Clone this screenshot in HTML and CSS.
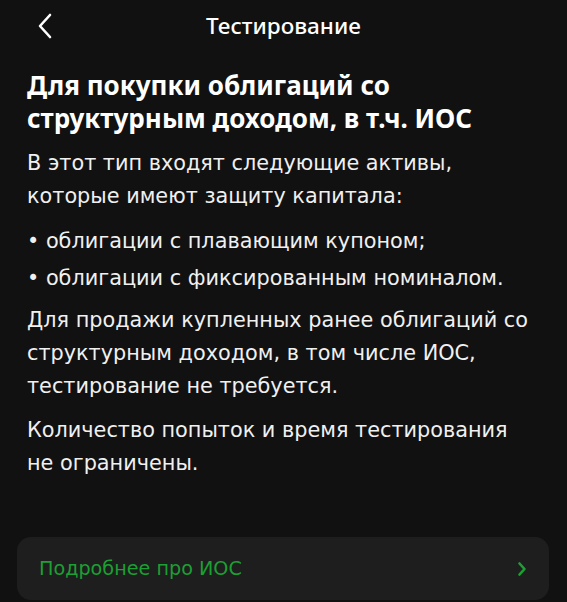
FILE: index.html
```html
<!DOCTYPE html>
<html lang="ru">

<head>
    <meta charset="UTF-8">
    <meta name="viewport" content="width=device-width, initial-scale=1.0">
    <title>Тестирование</title>
    <link rel="stylesheet" href="styles.css">
</head>

<body>
    <div class="header">
        <span class="back">
            <svg width="16" height="26" viewBox="0 0 16 26">
                <path d="M13 2 L3 13 L13 24" fill="none" stroke="#fff" stroke-width="2.6" stroke-linecap="round" stroke-linejoin="round" />
            </svg>
        </span>
        <div class="title">Тестирование</div>
    </div>
    <div class="content">
        <h1>Для покупки облигаций со структурным доходом, в т.ч. ИОС</h1>
        <p>В этот тип входят следующие активы,<br>которые имеют защиту капитала:</p>
        <ul class="list">
            <li>• облигации с плавающим купоном;</li>
            <li>• облигации с фиксированным номиналом.</li>
        </ul>
        <p>Для продажи купленных ранее облигаций со<br>структурным доходом, в том числе ИОС,<br>тестирование не требуется.</p>
        <p>Количество попыток и время тестирования<br>не ограничены.</p>
    </div>
    <div class="more">
        <span>Подробнее про ИОС</span>
        <svg width="10" height="16" viewBox="0 0 10 16">
            <path d="M2.5 2.5 L7.5 8 L2.5 13.5" fill="none" stroke="#1c9f33" stroke-width="2.6" stroke-linecap="round" stroke-linejoin="round" />
        </svg>
    </div>
</body>

</html>
```

FILE: styles.css
```css
html,
body {
    margin: 0;
    padding: 0;
    background: #111111;
}

body {
    width: 567px;
    height: 602px;
    overflow: hidden;
    color: #f0f0f0;
    font-family: "DejaVu Sans", "Noto Sans", sans-serif;
}

.header {
    position: relative;
    height: 52px;
    display: flex;
    align-items: center;
    justify-content: center;
}

.back {
    position: absolute;
    left: 37px;
    top: 13px;
    display: flex;
}

.title {
    font-family: "Noto Sans", sans-serif;
    font-size: 22.5px;
    font-weight: 500;
    color: #ffffff;
    margin-top: -1px;
}

.content {
    padding: 17px 27px 0;
}

.content h1 {
    margin: 0;
    font-family: "Noto Sans", sans-serif;
    font-size: 26px;
    line-height: 33px;
    font-weight: 700;
    color: #ffffff;
}

.content p {
    margin: 12px 0 0;
    font-size: 20.8px;
    line-height: 33px;
}

.content .list+p {
    margin-top: 9px;
}

.content p+p {
    margin-top: 11px;
}

.list {
    list-style: none;
    margin: 12px 0 0;
    padding: 0;
}

.list li {
    font-size: 20.8px;
    line-height: 33px;
}

.list li+li {
    margin-top: 4px;
}

.more {
    position: absolute;
    left: 17px;
    top: 537px;
    width: 532px;
    height: 63px;
    box-sizing: border-box;
    padding: 0 22px;
    display: flex;
    align-items: center;
    justify-content: space-between;
    background: #1e1e1e;
    border-radius: 14px;
    color: #1c9f33;
    font-size: 19.2px;
}
```
